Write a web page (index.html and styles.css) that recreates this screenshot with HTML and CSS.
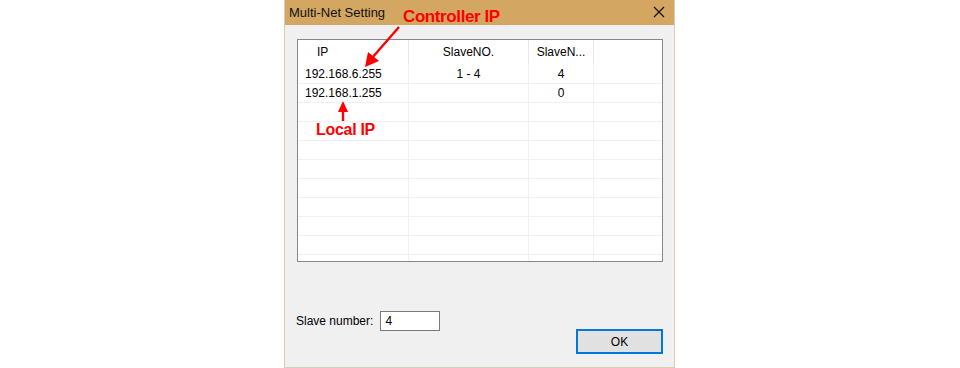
FILE: index.html
```html
<html lang="en">
  <head>
    <meta charset="UTF-8" />
    <title>Multi-Net Setting</title>
    <link rel="stylesheet" href="styles.css">
  </head>
  <body>
    <div class="dialog">
      <div class="titlebar">
        <span class="title">Multi-Net Setting</span>
        <svg class="close" width="12" height="12" viewBox="0 0 12 12">
          <path d="M1 1 L11 11 M11 1 L1 11" stroke="#111" stroke-width="1.2" fill="none" />
        </svg>
      </div>
      <div class="content">
        <div class="list">
          <div class="row head">
            <div class="cell ip">IP</div>
            <div class="cell no">SlaveNO.</div>
            <div class="cell num">SlaveN...</div>
            <div class="cell rest"></div>
          </div>
          <div class="row">
            <div class="cell ip">192.168.6.255</div>
            <div class="cell no">1 - 4</div>
            <div class="cell num">4</div>
            <div class="cell rest"></div>
          </div>
          <div class="row">
            <div class="cell ip">192.168.1.255</div>
            <div class="cell no"></div>
            <div class="cell num">0</div>
            <div class="cell rest"></div>
          </div>
          <div class="row"><div class="cell ip"></div><div class="cell no"></div><div class="cell num"></div><div class="cell rest"></div></div>
          <div class="row"><div class="cell ip"></div><div class="cell no"></div><div class="cell num"></div><div class="cell rest"></div></div>
          <div class="row"><div class="cell ip"></div><div class="cell no"></div><div class="cell num"></div><div class="cell rest"></div></div>
          <div class="row"><div class="cell ip"></div><div class="cell no"></div><div class="cell num"></div><div class="cell rest"></div></div>
          <div class="row"><div class="cell ip"></div><div class="cell no"></div><div class="cell num"></div><div class="cell rest"></div></div>
          <div class="row"><div class="cell ip"></div><div class="cell no"></div><div class="cell num"></div><div class="cell rest"></div></div>
          <div class="row"><div class="cell ip"></div><div class="cell no"></div><div class="cell num"></div><div class="cell rest"></div></div>
          <div class="row"><div class="cell ip"></div><div class="cell no"></div><div class="cell num"></div><div class="cell rest"></div></div>
          <div class="row"><div class="cell ip"></div><div class="cell no"></div><div class="cell num"></div><div class="cell rest"></div></div>
        </div>
        <div class="footer">
          <div class="field">
            <label for="slaveNum">Slave number:</label>
            <input type="text" id="slaveNum" value="4" />
          </div>
          <button class="btn">OK</button>
        </div>
      </div>
    </div>

    <!-- annotations drawn over the screenshot -->
    <span class="note note-controller">Controller IP</span>
    <span class="note note-local">Local IP</span>
    <svg class="arrows" width="960" height="368" viewBox="0 0 960 368">
      <path d="M399 27 L372 58" stroke="#f00" stroke-width="2.4" fill="none" />
      <polygon points="365,67 368,52 379,61" fill="#f00" />
      <path d="M343 121 L343 110" stroke="#f00" stroke-width="2.4" fill="none" />
      <polygon points="343,101 338,112 348,112" fill="#f00" />
    </svg>
  </body>
</html>
```

FILE: styles.css
```css
body {
  margin: 0;
  padding: 0;
  background-color: #fff;
  font-family: "Liberation Sans", Arial, sans-serif;
  font-size: 12px;
  color: #000;
  position: relative;
  height: 368px;
  overflow: hidden;
}

.dialog {
  margin-left: 284px;
  width: 389px;
  height: 367px;
  border: 1px solid #d9ccb9;
  border-top: none;
  background-color: #f0f0f0;
  display: flex;
  flex-direction: column;
}

.titlebar {
  height: 25px;
  background-color: #d3a661;
  display: flex;
  align-items: center;
  justify-content: space-between;
  padding: 0 9px 0 4px;
}

.title {
  font-size: 13px;
  color: #111;
  margin-top: -1px;
}

.close {
  margin-top: -1px;
}

.content {
  padding: 14px 11px 0 12px;
}

.list {
  width: 364px;
  height: 221px;
  border: 1px solid #828790;
  background-color: #fff;
  overflow: hidden;
}

.row {
  display: flex;
  height: 18px;
  border-bottom: 1px solid #f0f0f0;
}

.row.head {
  height: 25px;
  border-bottom: none;
}

.cell {
  border-right: 1px solid #f0f0f0;
  line-height: 18px;
  white-space: nowrap;
}

.head .cell {
  line-height: 24px;
  border-right-color: #e8e8e8;
}

.cell.ip {
  width: 103px;
  padding-left: 7px;
}

.head .cell.ip {
  width: 91px;
  padding-left: 19px;
}

.cell.no {
  width: 119px;
  text-align: center;
}

.cell.num {
  width: 64px;
  text-align: center;
}

.cell.rest {
  flex: 1;
  border-right: none;
}

.footer {
  margin-top: 49px;
  display: flex;
  justify-content: space-between;
  align-items: flex-start;
}

.field {
  display: flex;
  align-items: center;
  gap: 7px;
  margin-left: -1px;
}

.field label {
  font-size: 12px;
}

.field input[type="text"] {
  box-sizing: border-box;
  width: 60px;
  height: 20px;
  padding: 0 4px;
  border: 1px solid #7a7a7a;
  font-family: "Liberation Sans", Arial, sans-serif;
  font-size: 12px;
  outline: none;
}

.btn {
  margin-top: 18px;
  width: 87px;
  height: 25px;
  border: 2px solid #0078d7;
  background-color: #e1e1e1;
  font-family: "Liberation Sans", Arial, sans-serif;
  font-size: 12px;
  color: #000;
}

.note {
  position: absolute;
  color: #f00;
  font-weight: bold;
  line-height: 1;
  white-space: nowrap;
}

.note-controller {
  left: 403px;
  top: 8px;
  font-size: 17px;
  letter-spacing: -0.4px;
}

.note-local {
  left: 316px;
  top: 122px;
  font-size: 16px;
  letter-spacing: -0.3px;
}

.arrows {
  position: absolute;
  left: 0;
  top: 0;
}
```
